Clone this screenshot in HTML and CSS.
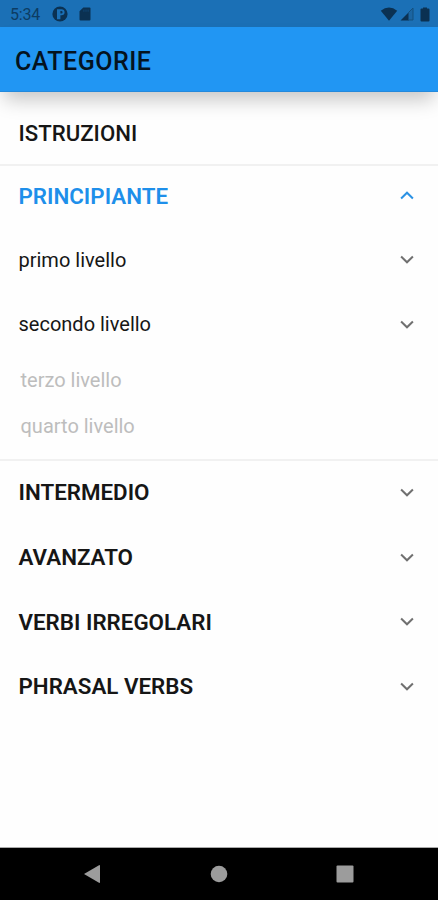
FILE: index.html
```html
<!DOCTYPE html>
<html lang="it">
<head>
<meta charset="utf-8">
<title>Categorie</title>
<link rel="stylesheet" href="styles.css">
</head>
<body>
<div class="screen">
  <div class="status">
    <span class="time">5:34</span>
    <svg class="app-icon" width="16" height="16" viewBox="0 0 16 16"><circle cx="8" cy="8" r="7.6"/><path class="cut" d="M5 3.2H9.4Q12.6 3.2 12.6 6.2Q12.6 9.2 9.4 9.2H8.4V13.2H5ZM8.4 5V7.4H9.2Q10.6 7.4 10.6 6.2Q10.6 5 9.2 5Z"/></svg>
    <svg class="sd-icon" width="12" height="14" viewBox="0 0 12 14"><path d="M4.3 .5H10.5Q11.5 .5 11.5 1.5V12.5Q11.5 13.5 10.5 13.5H1.5Q.5 13.5 .5 12.5V4.3Z"/><path class="cut faint" d="M4.4 2.6H5.4V4.8H4.4ZM6.5 2.6H7.5V4.8H6.5ZM8.6 2.6H9.6V4.8H8.6Z"/></svg>
    <span class="spacer"></span>
    <svg class="wifi" width="18" height="14" viewBox="0 0 18 14"><path d="M.8 3.8Q9 -2.8 17.2 3.8L9 13.7Z"/></svg>
    <svg class="signal" width="14" height="14" viewBox="0 0 14 14"><path d="M.5 13.5L9 5V13.5Z"/><path class="line" d="M8.5 5.5L13 1V13H8.5"/></svg>
    <svg class="battery" width="10" height="15" viewBox="0 0 10 15"><path d="M3 .5H7V1.6H8.5Q9.5 1.6 9.5 2.6V13.5Q9.5 14.5 8.5 14.5H1.5Q.5 14.5 .5 13.5V2.6Q.5 1.6 1.5 1.6H3Z"/></svg>
  </div>
  <header class="appbar"><h1>CATEGORIE</h1></header>
  <main class="list">
    <div class="row intro"><span class="label">ISTRUZIONI</span></div>
    <section class="group">
      <div class="row open"><span class="label bold">PRINCIPIANTE</span><svg class="chevron" width="14" height="9" viewBox="0 0 14 9"><path d="M1.1 7.5L7 1.7L12.9 7.5"/></svg></div>
      <div class="row sub"><span class="label">primo livello</span><svg class="chevron" width="14" height="9" viewBox="0 0 14 9"><path d="M1.1 1.5L7 7.3L12.9 1.5"/></svg></div>
      <div class="row sub"><span class="label">secondo livello</span><svg class="chevron" width="14" height="9" viewBox="0 0 14 9"><path d="M1.1 1.5L7 7.3L12.9 1.5"/></svg></div>
      <div class="row locked"><span class="label">terzo livello</span></div>
      <div class="row locked"><span class="label">quarto livello</span></div>
    </section>
    <div class="row"><span class="label bold">INTERMEDIO</span><svg class="chevron" width="14" height="9" viewBox="0 0 14 9"><path d="M1.1 1.5L7 7.3L12.9 1.5"/></svg></div>
    <div class="row"><span class="label bold">AVANZATO</span><svg class="chevron" width="14" height="9" viewBox="0 0 14 9"><path d="M1.1 1.5L7 7.3L12.9 1.5"/></svg></div>
    <div class="row"><span class="label bold">VERBI IRREGOLARI</span><svg class="chevron" width="14" height="9" viewBox="0 0 14 9"><path d="M1.1 1.5L7 7.3L12.9 1.5"/></svg></div>
    <div class="row"><span class="label bold">PHRASAL VERBS</span><svg class="chevron" width="14" height="9" viewBox="0 0 14 9"><path d="M1.1 1.5L7 7.3L12.9 1.5"/></svg></div>
  </main>
  <nav class="navbar">
    <svg width="18" height="20" viewBox="0 0 18 20"><path d="M1 10L16 1.2Q17 .8 17 2V18Q17 19.2 16 18.8Z"/></svg>
    <svg width="18" height="18" viewBox="0 0 18 18"><circle cx="9" cy="9" r="8.3"/></svg>
    <svg width="18" height="18" viewBox="0 0 18 18"><rect x=".5" y=".5" width="17" height="17" rx="1"/></svg>
  </nav>
</div>
</body>
</html>
```
FILE: styles.css
```css
* { box-sizing: border-box; }
body { margin: 0; background: #fefefe; font-family: Roboto, sans-serif; }
svg { display: block; flex: none; }
.screen { display: flex; flex-direction: column; width: 438px; height: 900px; overflow: hidden; }

.status { display: flex; align-items: center; height: 27px; padding: 1px 8px 0 10px; background: #1b70b6; color: #0d3c63; fill: #0b3152; }
.time { width: 42px; padding-top: 1px; font-size: 16px; line-height: 20px; letter-spacing: -.2px; }
.app-icon path { fill-rule: evenodd; }
.cut { fill: #1b70b6; }
.faint { opacity: .35; }
.sd-icon { margin-left: 11px; }
.spacer { flex: 1; }
.wifi { margin-right: 2px; }
.signal { margin-right: 6px; }
.line { fill: #1b65a2; stroke: #14507f; stroke-width: 1; }

.appbar { display: flex; align-items: center; height: 65px; padding: 5px 15px 0; background: #2196f3; border-bottom: 1px solid #2389dc; box-shadow: 0 12px 18px -4px rgba(0, 0, 0, .22); }
h1 { margin: 0; font-size: 25px; font-weight: 500; line-height: 30px; color: #04131f; letter-spacing: .5px; }

.list { flex: 1; }
.row { display: flex; align-items: center; justify-content: space-between; height: 64.7px; padding: 0 24px 0 18.5px; color: #161616; }
.intro { height: 72px; padding-top: 9px; }
.label { font-size: 22.2px; font-weight: 500; line-height: 28px; white-space: nowrap; }
.bold { margin-bottom: 2px; font-size: 22.35px; font-weight: 600; }
.chevron { margin-bottom: 1.8px; fill: none; stroke: #707070; stroke-width: 2; }
.group { height: 297px; border-top: 2px solid #f1f1f1; border-bottom: 2px solid #f1f1f1; }
.open { height: 61.4px; color: #1e8fea; }
.sub .label, .locked .label { font-size: 20px; font-weight: 400; }
.sub .chevron { margin-bottom: 0; }
.locked { height: 46px; padding: 0 24px 0 20.5px; color: #bdbdbd; }
.open .chevron { stroke: #2b92e4; }

.navbar { display: flex; align-items: center; justify-content: space-between; height: 53px; padding: 0 84px 0 83px; background: #000; border-top: 1px solid #aaa; fill: #9c9c9c; }
```
